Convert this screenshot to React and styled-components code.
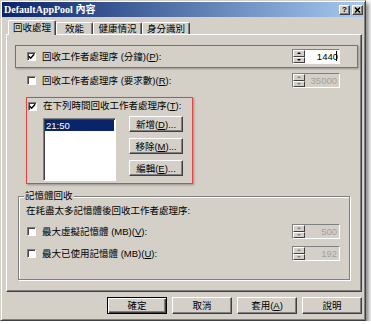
import React from "react";
import styled, { createGlobalStyle } from "styled-components";

const FONT = `"Liberation Sans", "Noto Sans CJK TC", sans-serif`;

const GlobalStyle = createGlobalStyle`
  html, body { margin: 0; padding: 0; background: #fff; }
  body { font-family: ${FONT}; font-size: 9.5px; color: #000; }
  * { box-sizing: border-box; }
`;

const Window = styled.div`
  width: 366px;
  height: 321px;
  background: #d4d0c8;
  border: 1px solid;
  border-color: #d4d0c8 #404040 #404040 #d4d0c8;
  box-shadow: inset 1px 1px 0 #fff, inset -1px -1px 0 #808080,
    3px 3px 4px rgba(0, 0, 0, 0.45);
  padding: 1px;
  display: flex;
  flex-direction: column;
`;

const TitleBar = styled.div`
  height: 15px;
  display: flex;
  align-items: center;
  padding: 0 1px 0 2px;
  background: linear-gradient(to right, #0a246a, #a6caf0);
`;

const TitleText = styled.span`
  color: #fff;
  font-family: "Liberation Serif", "Noto Sans CJK TC", serif;
  font-weight: bold;
  font-size: 10px;
  line-height: 15px;
  white-space: nowrap;
`;

const CaptionButtons = styled.div`
  margin-left: auto;
  display: flex;
  gap: 2px;
`;

const CaptionButton = styled.span`
  width: 11px;
  height: 10px;
  background: #d4d0c8;
  border: 1px solid;
  border-color: #fff #404040 #404040 #fff;
  box-shadow: inset -1px -1px 0 #808080;
  display: flex;
  align-items: center;
  justify-content: center;
  font-family: "Liberation Sans", sans-serif;
  font-weight: bold;
  font-size: 8px;
  line-height: 8px;
`;

const Body = styled.div`
  flex: 1;
  display: flex;
  flex-direction: column;
  padding: 3px 2px 0 4px;
`;

const TabStrip = styled.div`
  display: flex;
  align-items: flex-end;
  height: 15px;
  padding-left: 2px;
  margin-bottom: -1px;
  position: relative;
  z-index: 1;
`;

const Tab = styled.div`
  width: ${(p) => p.$w}px;
  height: ${(p) => (p.$active ? 15 : 12)}px;
  margin-bottom: ${(p) => (p.$active ? 0 : 1)}px;
  background: #d4d0c8;
  border: 1px solid;
  border-bottom: none;
  border-color: #fff #404040 #404040 #fff;
  border-radius: 2px 2px 0 0;
  box-shadow: inset -1px 0 0 #808080;
  display: flex;
  align-items: center;
  justify-content: center;
  padding-bottom: ${(p) => (p.$active ? 2 : 0)}px;
  line-height: 11px;
  white-space: nowrap;
`;

const Panel = styled.div`
  width: 356px;
  height: 258px;
  border: 1px solid;
  border-color: #fff #404040 #404040 #fff;
  box-shadow: inset -1px -1px 0 #808080;
  display: flex;
  flex-direction: column;
  align-items: flex-start;
`;

const HighlightBox = styled.div`
  border: 1px solid #e8433f;
  box-shadow: 1px 1px 2px rgba(0, 0, 0, 0.3);
`;

const WideBox = styled(HighlightBox)`
  align-self: stretch;
  margin: 10px 3px 0 8px;
  height: 23px;
  display: flex;
  align-items: center;
  padding: 0 17px 0 11px;
`;

const ListBoxFrame = styled(HighlightBox)`
  margin: 9px 0 0 19px;
  width: 167px;
  height: 87px;
  padding: 2px 0 0 1px;
  display: flex;
  flex-direction: column;
`;

const OptionRow = styled.div`
  align-self: stretch;
  height: 15px;
  margin-top: ${(p) => p.$top || 0}px;
  display: flex;
  align-items: center;
  padding: 0 ${(p) => p.$right || 0}px 0 ${(p) => p.$left || 0}px;
`;

const HeaderRow = styled.div`
  height: 12px;
  display: flex;
  align-items: center;
`;

const CheckBoxBox = styled.span`
  flex: none;
  width: 9px;
  height: 9px;
  background: #fff;
  border: 1px solid;
  border-color: #808080 #fff #fff #808080;
  box-shadow: inset 1px 1px 0 #404040;
  display: flex;
  align-items: center;
  justify-content: center;
`;

const Label = styled.span`
  margin-left: 6px;
  white-space: nowrap;
  line-height: 12px;
`;

const Spin = styled.div`
  margin-left: auto;
  width: 48px;
  height: 15px;
  display: flex;
  border: 1px solid;
  border-color: #808080 #fff #fff #808080;
`;

const SpinButtons = styled.div`
  width: 12px;
  display: flex;
  flex-direction: column;
`;

const SpinHalf = styled.span`
  flex: 1;
  background: #d4d0c8;
  border: 1px solid;
  border-color: #fff #404040 #404040 #fff;
  display: flex;
  align-items: center;
  justify-content: center;
  &::after {
    content: "";
    border-left: 2px solid transparent;
    border-right: 2px solid transparent;
    ${(p) =>
      p.$down
        ? `border-top: 2px solid ${p.$disabled ? "#808080" : "#000"};`
        : `border-bottom: 2px solid ${p.$disabled ? "#808080" : "#000"};`}
  }
`;

const SpinField = styled.span`
  flex: 1;
  background: ${(p) => (p.$disabled ? "#d4d0c8" : "#fff")};
  color: ${(p) => (p.$disabled ? "#a0a0a0" : "#000")};
  text-align: right;
  padding-right: 2px;
  line-height: 13px;
  overflow: hidden;
  white-space: nowrap;
`;

const Caret = styled.span`
  display: inline-block;
  width: 1px;
  height: 10px;
  background: #000;
  vertical-align: -1px;
  margin-left: -2px;
`;

const ListArea = styled.div`
  display: flex;
  align-items: flex-start;
  margin: 6px 0 0 15px;
`;

const ListBox = styled.div`
  width: 73px;
  height: 63px;
  background: #fff;
  border: 1px solid;
  border-color: #808080 #fff #fff #808080;
  box-shadow: inset 1px 1px 0 #404040;
  padding: 1px 1px;
`;

const ListItem = styled.div`
  height: 11px;
  line-height: 11px;
  padding-left: 1px;
  background: ${(p) => (p.$selected ? "#0a246a" : "transparent")};
  color: ${(p) => (p.$selected ? "#fff" : "#000")};
`;

const ButtonColumn = styled.div`
  margin: -2px 0 0 13px;
  display: flex;
  flex-direction: column;
  gap: 6px;
`;

const Button = styled.button`
  width: ${(p) => p.$w}px;
  height: ${(p) => p.$h}px;
  padding: 0;
  margin: 0;
  background: #d4d0c8;
  font: inherit;
  line-height: 11px;
  color: #000;
  white-space: nowrap;
  border: 1px solid;
  border-color: ${(p) => (p.$default ? "#000" : "#fff #404040 #404040 #fff")};
  box-shadow: ${(p) =>
    p.$default
      ? "inset 1px 1px 0 #fff, inset -1px -1px 0 #404040, inset -2px -2px 0 #808080"
      : "inset -1px -1px 0 #808080"};
`;

const Group = styled.div`
  position: relative;
  margin: 12px 0 0 11px;
  width: 332px;
  height: 84px;
  border: 1px solid #808080;
  box-shadow: inset 1px 1px 0 #fff, 1px 1px 0 #fff;
  padding: 8px 9px 0 7px;
  display: flex;
  flex-direction: column;
`;

const GroupLegend = styled.span`
  position: absolute;
  top: -7px;
  left: 5px;
  padding: 0 1px;
  background: #d4d0c8;
  line-height: 12px;
  white-space: nowrap;
`;

const GroupText = styled.div`
  line-height: 12px;
  white-space: nowrap;
`;

const GroupRow = styled.div`
  height: 15px;
  margin-top: 7px;
  display: flex;
  align-items: center;
  padding-left: 1px;
`;

const ButtonRow = styled.div`
  margin-top: 5px;
  display: flex;
  justify-content: flex-end;
  gap: 5px;
`;

function CheckBox({ checked }) {
  return (
    <CheckBoxBox>
      {checked && (
        <svg width="7" height="7" viewBox="0 0 7 7">
          <path d="M0.8 3.2 L2.6 5.2 L6.2 1.2" fill="none" stroke="#000" strokeWidth="1.4" />
        </svg>
      )}
    </CheckBoxBox>
  );
}

function SpinBox({ value, disabled, caret }) {
  return (
    <Spin>
      <SpinButtons>
        <SpinHalf $disabled={disabled} />
        <SpinHalf $down $disabled={disabled} />
      </SpinButtons>
      <SpinField $disabled={disabled}>
        {value}
        {caret && <Caret />}
      </SpinField>
    </Spin>
  );
}

export default function App() {
  return (
    <>
      <GlobalStyle />
      <Window>
        <TitleBar>
          <TitleText>DefaultAppPool 內容</TitleText>
          <CaptionButtons>
            <CaptionButton>?</CaptionButton>
            <CaptionButton>
              <svg width="7" height="6" viewBox="0 0 7 6">
                <path d="M1 0.5 L6 5.5 M6 0.5 L1 5.5" stroke="#000" strokeWidth="1.5" />
              </svg>
            </CaptionButton>
          </CaptionButtons>
        </TitleBar>
        <Body>
          <TabStrip>
            <Tab $active $w={48}>回收處理</Tab>
            <Tab $w={37}>效能</Tab>
            <Tab $w={49}>健康情況</Tab>
            <Tab $w={48}>身分識別</Tab>
          </TabStrip>
          <Panel>
            <WideBox>
              <CheckBox checked />
              <Label>
                回收工作者處理序 (分鐘)(<u>P</u>):
              </Label>
              <SpinBox value="1440" caret />
            </WideBox>
            <OptionRow $top={5} $left={20} $right={21}>
              <CheckBox />
              <Label>
                回收工作者處理序 (要求數)(<u>R</u>):
              </Label>
              <SpinBox value="35000" disabled />
            </OptionRow>
            <ListBoxFrame>
              <HeaderRow>
                <CheckBox checked />
                <Label>
                  在下列時間回收工作者處理序(<u>T</u>):
                </Label>
              </HeaderRow>
              <ListArea>
                <ListBox>
                  <ListItem $selected>21:50</ListItem>
                </ListBox>
                <ButtonColumn>
                  <Button $w={54} $h={16}>
                    新增(<u>D</u>)...
                  </Button>
                  <Button $w={54} $h={16}>
                    移除(<u>M</u>)...
                  </Button>
                  <Button $w={54} $h={16}>
                    編輯(<u>E</u>)...
                  </Button>
                </ButtonColumn>
              </ListArea>
            </ListBoxFrame>
            <Group>
              <GroupLegend>記憶體回收</GroupLegend>
              <GroupText>在耗盡太多記憶體後回收工作者處理序:</GroupText>
              <GroupRow>
                <CheckBox />
                <Label>
                  最大虛擬記憶體 (MB)(<u>V</u>):
                </Label>
                <SpinBox value="500" disabled />
              </GroupRow>
              <GroupRow>
                <CheckBox />
                <Label>
                  最大已使用記憶體 (MB)(<u>U</u>):
                </Label>
                <SpinBox value="192" disabled />
              </GroupRow>
            </Group>
          </Panel>
          <ButtonRow>
            <Button $w={60} $h={17} $default>確定</Button>
            <Button $w={60} $h={17}>取消</Button>
            <Button $w={60} $h={17}>
              套用(<u>A</u>)
            </Button>
            <Button $w={60} $h={17}>說明</Button>
          </ButtonRow>
        </Body>
      </Window>
    </>
  );
}
